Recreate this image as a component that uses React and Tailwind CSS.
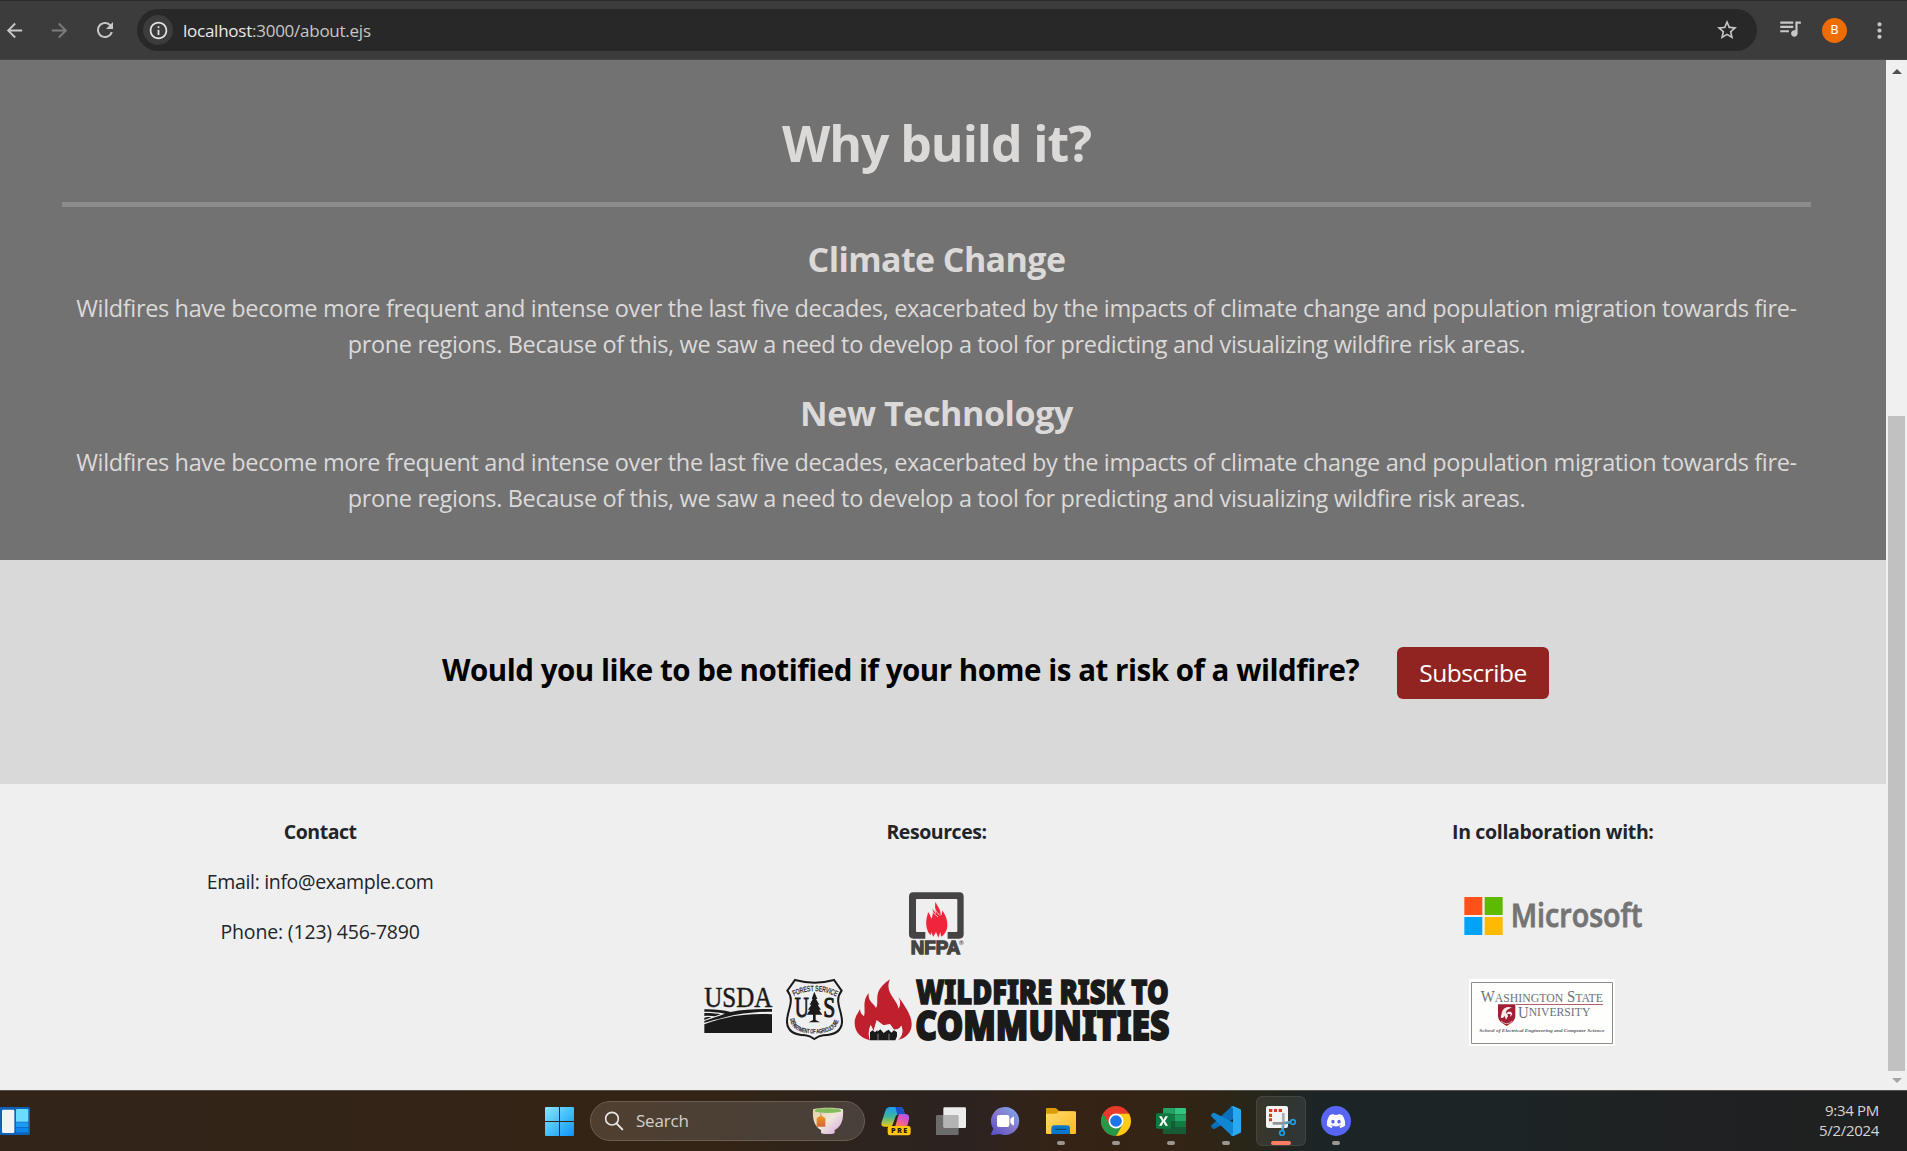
import {
  MdArrowBack,
  MdArrowForward,
  MdRefresh,
  MdInfoOutline,
  MdStarOutline,
  MdQueueMusic,
  MdMoreVert,
} from 'react-icons/md'
import { FaDiscord } from 'react-icons/fa'

/* ---------- Browser toolbar ---------- */

function BrowserBar() {
  return (
    <header className="flex h-[60px] items-center border-t border-b border-t-[#2a2a2a] border-b-[#474747] bg-[#3c3c3c] text-[#c7c7c7]">
      <div className="flex w-[29px] justify-center">
        <MdArrowBack className="size-[23px] shrink-0" />
      </div>
      <div className="flex w-[61px] justify-center text-[#7c7c7c]">
        <MdArrowForward className="size-[23px]" />
      </div>
      <div className="flex w-[30px] justify-center">
        <MdRefresh className="size-6" />
      </div>
      <div className="ml-[17px] flex h-[42px] w-[1620px] items-center rounded-full bg-[#282828] pr-2 pl-[6px]">
        <span className="flex size-[30px] items-center justify-center rounded-full bg-[#3c3c3c] text-[#e3e3e3]">
          <MdInfoOutline className="size-[21px]" />
        </span>
        <span className="ml-2.5 pt-px text-[17px] leading-6 tracking-[-0.25px] text-[#c7c7c7]">
          <span className="text-[#e8e8e8]">localhost</span>:3000/about.ejs
        </span>
        <MdStarOutline className="mr-2.5 ml-auto size-6" />
      </div>
      <MdQueueMusic className="mb-1 ml-[20px] size-[26px]" />
      <span className="ml-[19px] flex size-[25px] items-center justify-center rounded-full bg-[#ef6c00] font-['Roboto',sans-serif] text-[13px] text-white">
        B
      </span>
      <MdMoreVert className="ml-5 size-[25px]" />
    </header>
  )
}

function Scrollbar() {
  return (
    <div className="flex w-[21px] flex-col items-center bg-[#f0f0f0]">
      <svg className="mt-[9px] h-[5px] w-[10px]" viewBox="0 0 10 5">
        <path d="M5 0 10 5H0Z" fill="#505050" />
      </svg>
      <div className="mt-[342px] h-[655px] w-[17px] bg-[#c1c1c1]" />
      <svg className="mt-[7px] h-[5px] w-[10px]" viewBox="0 0 10 5">
        <path d="M0 0H10L5 5Z" fill="#a3a3a3" />
      </svg>
    </div>
  )
}

/* ---------- Page sections ---------- */

function Reason({ title, titleClass }) {
  return (
    <article>
      <h2 className={'text-[34px] leading-[42px] font-bold ' + titleClass}>{title}</h2>
      <p className="mt-[10px] text-[23.5px] leading-9 tracking-[-0.355px] whitespace-nowrap">
        Wildfires have become more frequent and intense over the last five decades, exacerbated by the impacts of climate
        change and population migration towards fire-
        <br />
        prone regions. Because of this, we saw a need to develop a tool for predicting and visualizing wildfire risk
        areas.
      </p>
    </article>
  )
}

function WhySection() {
  return (
    <section className="h-[500px] bg-[#727272] pt-[53px] pr-[75px] pl-[62px] text-center text-[#dcd9d9]">
      <h1 className="text-[50px] leading-[60px] font-bold tracking-[-1.1px]">Why build it?</h1>
      <div className="mt-[29px] h-[5px] bg-[#8c8c8c]" />
      <div className="mt-[31px] flex flex-col gap-[30px]">
        <Reason title="Climate Change" titleClass="tracking-[-0.6px]" />
        <Reason title="New Technology" titleClass="tracking-[-0.42px]" />
      </div>
    </section>
  )
}

function SubscribeSection() {
  return (
    <section className="flex h-56 items-start bg-[#d9d9d9] pt-[87px] pl-[442px]">
      <p className="w-[955px] text-[29.5px] leading-[46px] font-bold tracking-[-0.47px] whitespace-nowrap text-black">
        Would you like to be notified if your home is at risk of a wildfire?
      </p>
      <button className="h-[52px] w-[152px] rounded-md bg-[#912420] text-[24.5px] tracking-[-0.5px] text-white">
        Subscribe
      </button>
    </section>
  )
}

function NfpaLogo() {
  return (
    <svg className="mt-[44px] h-[66px] w-[57px] overflow-visible" viewBox="684 93 171 198">
      <path
        d="M736 236H700Q687 236 687 223V110Q687 97 700 97H838Q851 97 851 110V223Q851 236 838 236H803V216H829Q832 216 832 213V120Q832 117 829 117H711Q708 117 708 120V213Q708 216 711 216H736Z"
        fill="#464344"
      />
      <path
        d="M766 125C774 142 783 147 782 168C786 163 787 157 786 151C797 164 803 180 802 198C801 214 792 226 783 230L781 216L775 233L768 216L760 230L753 216L752 226C741 215 737 196 739 180C740 170 744 163 744 156C750 163 752 170 754 177C758 167 761 158 757 147C764 151 763 158 770 163C777 168 779 173 778 179C774 171 762 160 766 125Z"
        fill="#f0243a"
      />
      <path d="M763 134C760 147 770 155 779 166M757 150C757 160 768 164 774 171" stroke="#efefef" strokeWidth="2.5" fill="none" />
      <text
        x="692"
        y="283"
        textLength="149"
        lengthAdjust="spacingAndGlyphs"
        fontSize="56"
        fill="#464344"
        stroke="#464344"
        strokeWidth="4"
        className="font-['Liberation_Sans',sans-serif] font-bold"
      >
        NFPA
      </text>
      <circle cx="844" cy="248" r="6.5" fill="none" stroke="#77757a" strokeWidth="1.5" />
      <text x="840.5" y="252" fontSize="10" fill="#464344" className="font-['Liberation_Sans',sans-serif] font-bold">
        R
      </text>
    </svg>
  )
}

function WildfireRiskLogo() {
  return (
    <svg className="mt-[21px] ml-0.5 h-16 w-[466px] overflow-visible" viewBox="72 357 1398 192">
      <g fill="#1a1a1a">
        <text
          x="73"
          y="443"
          textLength="204"
          lengthAdjust="spacingAndGlyphs"
          fontSize="88"
          stroke="#1a1a1a"
          strokeWidth="1.5"
          className="font-['Liberation_Serif',serif]"
        >
          USDA
        </text>
        <path d="M73 451C100 450 130 453 152 459C190 451 235 450 276 450V458C225 458 175 464 138 474C110 481 90 486 73 491V486C95 478 115 471 135 464C115 459 92 458 73 458Z" />
        <path d="M73 462C90 461 108 463 122 466L104 472C94 470 84 470 73 471ZM73 476C80 474 87 474 94 475L73 483Z" />
        <path d="M73 496C140 470 205 463 276 466V522H73Z" />

        <path
          d="M345 363C382 373 425 373 462 363L485 395C477 405 473 417 475 431C477 450 487 468 486 490C484 517 460 528 430 529C418 530 410 535 403 540C396 535 388 530 376 529C346 528 323 517 321 490C320 468 330 450 332 431C334 417 330 405 322 395Z"
          fill="none"
          stroke="#1a1a1a"
          strokeWidth="6"
        />
        <path id="shieldTop" d="M342 411Q403 381 466 411" fill="none" />
        <path id="shieldBottom" d="M331 479C333 515 368 523 403 523C438 523 473 515 476 479" fill="none" />
        <g className="font-['Liberation_Sans',sans-serif]" stroke="#1a1a1a" strokeWidth="0.8">
          <text fontSize="23">
            <textPath href="#shieldTop" textLength="132" lengthAdjust="spacingAndGlyphs">
              FOREST SERVICE
            </textPath>
          </text>
          <text fontSize="18">
            <textPath href="#shieldBottom" textLength="184" lengthAdjust="spacingAndGlyphs">
              DEPARTMENT OF AGRICULTURE
            </textPath>
          </text>
        </g>
        <g fontSize="86" className="font-['Liberation_Serif',serif]" stroke="#1a1a1a" strokeWidth="3">
          <text x="344" y="475" textLength="42" lengthAdjust="spacingAndGlyphs">
            U
          </text>
          <text x="430" y="475" textLength="36" lengthAdjust="spacingAndGlyphs">
            S
          </text>
        </g>
        <path d="M403 398L412 420L408 420L418 437L413 437L423 452L417 452L427 467H407V483L420 490H386L399 483V467H380L390 452L384 452L394 437L389 437L398 420L395 420Z" />
      </g>

      <path
        d="M630 361C612 400 651 420 656 449C662 438 662 426 655 413C674 440 694 466 695 494C696 520 678 538 654 543C668 530 670 517 664 500C660 508 652 512 642 512L630 496L610 499L590 484L581 516L572 497C566 512 564 528 570 544C542 538 523 518 524 490C524 474 534 463 540 451C541 462 546 468 552 472C558 452 545 428 566 402C564 428 578 430 588 447C600 425 574 398 630 361Z"
        fill="#c01f2e"
      />
      <path
        d="M572 500L581 516L590 484L610 499L630 496L642 512C652 512 660 508 664 500C670 517 668 530 654 543H570C564 528 566 512 572 500Z"
        fill="#efefef"
      />
      <path
        d="M570 544V520L578 514L585 520L592 513V518L601 511L611 522L620 515L626 512L634 521L642 514L651 520V532L646 544Z"
        fill="#1a1a1a"
      />
      <path d="M594 524V543M627 524V543" stroke="#efefef" strokeWidth="1.5" />

      <g fill="#1a1a1a" className="font-['Noto_Sans',sans-serif] font-black">
        <text x="708" y="435" fontSize="101" textLength="758" lengthAdjust="spacingAndGlyphs" stroke="#1a1a1a" strokeWidth="4.5">
          WILDFIRE RISK TO
        </text>
        <text x="706" y="542" fontSize="124" textLength="762" lengthAdjust="spacingAndGlyphs" stroke="#1a1a1a" strokeWidth="5.5">
          COMMUNITIES
        </text>
      </g>
    </svg>
  )
}

function MicrosoftLogo() {
  return (
    <svg className="mt-[49px] h-[40px] w-[178px] overflow-visible" viewBox="102 81 534 120">
      <path d="M103 84h54v54h-54z" fill="#ff5119" />
      <path d="M164 84h54v54h-54z" fill="#5eba00" />
      <path d="M103 144h54v54h-54z" fill="#00a3f5" />
      <path d="M164 144h54v54h-54z" fill="#ffb900" />
      <text
        x="242"
        y="175"
        fontSize="96"
        textLength="395"
        lengthAdjust="spacingAndGlyphs"
        fill="#747474"
        stroke="#747474"
        strokeWidth="2.5"
        className="font-['Open_Sans',sans-serif] font-semibold"
      >
        Microsoft
      </text>
    </svg>
  )
}

function WsuLogo() {
  return (
    <svg className="mt-[43px] mr-[22px] h-[67px] w-[146px]" viewBox="117 330 438 201">
      <path d="M117 330h438v201H117z" fill="#fefefd" />
      <path d="M124.5 340.500h423v183h-423z" fill="none" stroke="#8d8d8d" strokeWidth="3" />
      <g fill="#6b7378" className="font-['Liberation_Serif',serif]">
        <text x="152" y="399" fontSize="48" textLength="367" lengthAdjust="spacingAndGlyphs">
          W<tspan fontSize="38">ASHINGTON</tspan> S<tspan fontSize="38">TATE</tspan>
        </text>
        <text x="264" y="441" fontSize="48" textLength="217" lengthAdjust="spacingAndGlyphs">
          <tspan dy="5">U</tspan>
          <tspan dy="-5" fontSize="38">
            NIVERSITY
          </tspan>
        </text>
      </g>
      <path d="M258 406.500H519" stroke="#a23c4b" strokeWidth="2.500" />
      <path d="M204 406H256V440C256 456 243 463 230 471C217 463 204 456 204 440Z" fill="#a11f34" />
      <path
        d="M246 416C234 410 220 416 216 428L212 446C217 448 222 446 224 440L228 452L234 442L232 434L242 436L240 444L247 436L243 428L234 428L228 434C226 424 236 418 246 416Z"
        fill="#f6eeee"
      />
      <path d="M213 456Q230 472 247 456" fill="none" stroke="#f6eeee" strokeWidth="2" />
      <text
        x="148"
        y="490"
        fontSize="15"
        textLength="375"
        lengthAdjust="spacingAndGlyphs"
        fill="#55595c"
        className="font-['Liberation_Serif',serif] font-bold italic"
      >
        School of Electrical Engineering and Computer Science
      </text>
    </svg>
  )
}

function Footer() {
  return (
    <footer className="grid h-[306px] grid-cols-3 bg-[#efefef] pt-[33px] pr-[25px] pl-3 text-[19.500px] leading-[30px] text-[#212529]">
      <div className="flex flex-col items-center gap-5">
        <h3 className="font-bold tracking-[-0.45px]">Contact</h3>
        <p className="tracking-[-0.34px]">Email: info@example.com</p>
        <p className="tracking-[-0.17px]">Phone: (123) 456-7890</p>
      </div>
      <div className="flex flex-col items-center">
        <h3 className="font-bold tracking-[-0.45px]">Resources:</h3>
        <NfpaLogo />
        <WildfireRiskLogo />
      </div>
      <div className="flex flex-col items-center">
        <h3 className="font-bold tracking-[-0.34px]">In collaboration with:</h3>
        <MicrosoftLogo />
        <WsuLogo />
      </div>
    </footer>
  )
}

/* ---------- Taskbar ---------- */

function WidgetsIcon() {
  return (
    <svg className="h-7 w-[30px]" viewBox="0 0 90 84">
      <rect x="-8" width="98" height="84" rx="5" fill="#0f62b8" />
      <rect x="6" y="8" width="37" height="70" rx="4" fill="#f3f3f3" />
      <path d="M48 9Q48 6 51 6H82Q85 6 85 9V44H48Z" fill="#69dcff" />
      <path d="M48 46H85V60H48Z" fill="#1a9cf5" />
      <path d="M48 62H85V76H48Z" fill="#0f86ee" />
    </svg>
  )
}

function StartIcon() {
  return (
    <svg className="size-[29px]" viewBox="0 0 87 87">
      <defs>
        <linearGradient id="startGrad" x1="0" y1="0" x2="1" y2="1">
          <stop offset="0" stopColor="#8be2ff" />
          <stop offset="0.5" stopColor="#45c0fa" />
          <stop offset="1" stopColor="#0c93fb" />
        </linearGradient>
      </defs>
      <path
        d="M3 0H42V42H0V3Q0 0 3 0ZM45 0H84Q87 0 87 3V42H45ZM0 45H42V87H3Q0 87 0 84ZM45 45H87V84Q87 87 84 87H45Z"
        fill="url(#startGrad)"
      />
    </svg>
  )
}

function SearchBox() {
  return (
    <div className="ml-[16px] flex h-10 w-[275px] items-center rounded-full border border-[#6b5e50] bg-linear-to-r from-[#4f3f30] to-[#48403a] pl-[13px]">
      <svg className="size-5" viewBox="222 79 60 60">
        <circle cx="246" cy="102" r="19" fill="none" stroke="#e8e6e4" strokeWidth="5" />
        <path d="M260 117L277 134" stroke="#e8e6e4" strokeWidth="6" strokeLinecap="round" />
      </svg>
      <span className="ml-3 text-[17px] leading-6 tracking-[-0.2px] text-[#d6d0ca]">Search</span>
      <svg className="mr-5 ml-auto h-7 w-8" viewBox="846 69 96 84">
        <defs>
          <linearGradient id="cupGrad" x1="0" y1="0" x2="1" y2="1">
            <stop offset="0" stopColor="#e6cf9f" />
            <stop offset="0.5" stopColor="#efe6d9" />
            <stop offset="1" stopColor="#d7a5ea" />
          </linearGradient>
          <linearGradient id="tagGrad" x1="0" y1="0" x2="0" y2="1">
            <stop offset="0" stopColor="#ec9a1c" />
            <stop offset="1" stopColor="#d0683a" />
          </linearGradient>
        </defs>
        <path
          d="M849 76C875 70 914 70 939 76C941 104 936 128 914 138V146Q914 150 894 150Q874 150 873 146V138C852 128 847 104 849 76Z"
          fill="url(#cupGrad)"
        />
        <ellipse cx="894" cy="80" rx="40" ry="7" fill="#83bd5b" />
        <path d="M872 84V98" stroke="#b9a9b5" strokeWidth="4" />
        <path d="M873 94L886 103V128H860V103Z" fill="url(#tagGrad)" />
      </svg>
    </div>
  )
}

function CopilotIcon() {
  return (
    <svg className="size-[30px]" viewBox="1055 66 90 90">
      <defs>
        <linearGradient id="cpA" x1="0" y1="0" x2="0" y2="1">
          <stop offset="0" stopColor="#1d9bf0" />
          <stop offset="0.5" stopColor="#3fb79a" />
          <stop offset="1" stopColor="#f2c911" />
        </linearGradient>
        <linearGradient id="cpB" x1="0.8" y1="0" x2="0.2" y2="1">
          <stop offset="0" stopColor="#a855f0" />
          <stop offset="0.5" stopColor="#e455b5" />
          <stop offset="1" stopColor="#fb7a55" />
        </linearGradient>
      </defs>
      <path d="M1082 69H1112Q1120 69 1123 79L1126 90H1110Q1102 90 1098 100L1090 122Q1087 128 1080 128H1066Q1053 128 1057 114L1068 80Q1072 69 1082 69Z" fill="url(#cpA)" />
      <path d="M1098 69H1112Q1120 69 1123 79L1126 90H1110L1104 92Z" fill="#1d4fc9" />
      <path d="M1110 90H1130Q1142 92 1139 106L1134 126H1098L1106 98Q1108 92 1110 90Z" fill="url(#cpB)" />
      <rect x="1075" y="126" width="69" height="28" rx="7" fill="#ffc708" />
      <text
        x="1085"
        y="148"
        fontSize="22"
        textLength="49"
        fill="#1d1a10"
        className="font-['Open_Sans',sans-serif] font-extrabold"
      >
        PRE
      </text>
    </svg>
  )
}

function TaskViewIcon() {
  return (
    <svg className="size-[30px]" viewBox="-12 63 90 90">
      <rect x="10" y="67" width="68" height="62" rx="4" fill="#ececec" />
      <path d="M-8 90H10V125Q10 129 14 129H56V146Q56 150 52 150H-12V94Q-12 90 -8 90Z" fill="#6c6c6c" />
      <path d="M10 90H52Q56 90 56 94V129H14Q10 129 10 125Z" fill="#b4b4b4" />
    </svg>
  )
}

function TeamsIcon() {
  return (
    <svg className="size-[30px]" viewBox="153 63 90 90">
      <defs>
        <linearGradient id="chatGrad" x1="0.9" y1="0.1" x2="0.1" y2="1">
          <stop offset="0" stopColor="#7aa5ee" />
          <stop offset="0.45" stopColor="#8878c9" />
          <stop offset="1" stopColor="#5a52c8" />
        </linearGradient>
      </defs>
      <path d="M196 66A42 42 0 1 1 180 147L157 150Q152 150 154 145L160 131A42 42 0 0 1 196 66Z" fill="url(#chatGrad)" />
      <rect x="171" y="90" width="37" height="36" rx="6" fill="#fff" />
      <path d="M211 102L219 95Q222 93 222 97V119Q222 123 219 121L211 114Z" fill="#fff" />
    </svg>
  )
}

function FolderIcon() {
  return (
    <svg className="size-[30px]" viewBox="318 63 90 90">
      <defs>
        <linearGradient id="folderGrad" x1="0" y1="0" x2="1" y2="1">
          <stop offset="0" stopColor="#ffdb6b" />
          <stop offset="1" stopColor="#fcb920" />
        </linearGradient>
      </defs>
      <path d="M318 72Q318 69 321 69H345Q348 69 350 71L358 79H400V95H318Z" fill="#dc9c05" />
      <path d="M318 86H345Q350 86 353 83L356 79H405Q408 79 408 82V144Q408 147 405 147H321Q318 147 318 144Z" fill="url(#folderGrad)" />
      <path d="M334 147V131Q334 121 344 121H380Q390 121 390 131V147Z" fill="#0a78c8" />
      <path d="M346 133H378" stroke="#06406f" strokeWidth="3" strokeLinecap="round" />
    </svg>
  )
}

function ChromeIcon() {
  return (
    <svg className="size-[30px]" viewBox="-45 -45 90 90">
      <circle r="45" fill="#e8392d" />
      <path d="M0 -22H39.200A45 45 0 0 1 0 45L19 11Z" fill="#fdcb14" />
      <path d="M-39 -22.500L-19 11L0 22L19.500 11L0 45A45 45 0 0 1 -39 -22.500Z" fill="#279847" />
      <circle r="22.500" fill="#fff" />
      <circle r="17.500" fill="#1e75ea" />
    </svg>
  )
}

function ExcelIcon() {
  return (
    <svg className="size-[30px]" viewBox="648 63 90 90">
      <path d="M669 72Q669 69 672 69H704V88H669Z" fill="#21a366" />
      <path d="M704 69H735Q738 69 738 72V88H704Z" fill="#33c481" />
      <path d="M669 88H704V108H669Z" fill="#107c41" />
      <path d="M704 88H738V108H704Z" fill="#21a366" />
      <path d="M669 108H704V128H669Z" fill="#185c37" />
      <path d="M704 108H738V128H704Z" fill="#107c41" />
      <path d="M669 127H738V144Q738 147 735 147H672Q669 147 669 144Z" fill="#185c37" />
      <rect x="648" y="85" width="45" height="46" rx="4" fill="#0f7a40" />
      <path d="M657 94H665L670.500 104L676 94H684L675 108L684 122H676L670.500 112L665 122H657L666 108Z" fill="#fff" />
    </svg>
  )
}

function VSCodeIcon() {
  return (
    <svg className="size-[30px]" viewBox="813 63 90 90">
      <path d="M880 64L903 74V90L824 131Q820 133 817 130L814 126Q812 123 815 120L872 67Q876 63 880 64Z" fill="#0a6fb8" />
      <path d="M880 153L903 142V124L824 84Q820 82 817 85L814 89Q812 92 815 95L872 149Q876 153 880 153Z" fill="#1187d2" />
      <path d="M880 64L900 72Q903 74 903 77V139Q903 142 900 144L880 153Q875 153 872 149Q879 151 879 144V72Q879 65 872 67Q876 62 880 64Z" fill="#2aa9f3" />
    </svg>
  )
}

function SnippingIcon() {
  return (
    <svg className="size-[30px]" viewBox="978 63 90 90">
      <rect x="978" y="63" width="66" height="66" rx="6" fill="#f1f3f4" />
      <path d="M987 72h10v9h-10zM1002 72h9v9h-9zM1016 72h10v9h-10zM987 86h9v10h-9zM987 100h9v9h-9z" fill="#d83b1c" />
      <path d="M1030 84V112L1028 134" fill="none" stroke="#a9b0b6" strokeWidth="8" />
      <path d="M998 115H1030L1050 111" fill="none" stroke="#8d959c" strokeWidth="8" />
      <circle cx="1059" cy="111" r="7" fill="none" stroke="#1ba0e6" strokeWidth="5" />
      <circle cx="1026" cy="144" r="7" fill="none" stroke="#1ba0e6" strokeWidth="5" />
      <path d="M1052 112L1036 116M1028 137L1031 122" stroke="#1ba0e6" strokeWidth="4" />
    </svg>
  )
}

function DiscordIcon() {
  return (
    <span className="flex size-[30px] items-center justify-center rounded-full bg-[#5865f2]">
      <FaDiscord className="size-[20px] text-white" />
    </span>
  )
}

function TaskbarItem({ icon: Icon, running, active }) {
  return (
    <div className="flex h-[60px] w-[55px] justify-center pt-[5px]">
      <div
        className={
          'flex h-[50px] w-[50px] flex-col items-center rounded-md border pt-[9px] ' +
          (active ? 'border-white/8 bg-white/8' : 'border-transparent')
        }
      >
        <Icon />
        {running && (
          <span
            className={'mt-[5px] h-1 rounded-full ' + (active ? 'w-5 bg-[#f77e63]' : 'w-2 bg-[#9b9690]')}
          />
        )}
      </div>
    </div>
  )
}

const APPS = [
  { icon: CopilotIcon },
  { icon: TaskViewIcon },
  { icon: TeamsIcon },
  { icon: FolderIcon, running: true },
  { icon: ChromeIcon, running: true },
  { icon: ExcelIcon, running: true },
  { icon: VSCodeIcon, running: true },
  { icon: SnippingIcon, running: true, active: true },
  { icon: DiscordIcon, running: true },
]

function Taskbar() {
  return (
    <div className="flex h-[61px] items-center border-t border-[#55504a] bg-[linear-gradient(90deg,#33241a_0%,#332415_38%,#2d241f_45%,#2c2320_51%,#352315_56%,#332415_62%,#2a2618_65%,#1c2526_69%,#1b2526_75%,#1f2122_88%,#202020_100%)]">
      <WidgetsIcon />
      <div className="ml-[515px]">
        <StartIcon />
      </div>
      <SearchBox />
      <div className="ml-[3px] flex">
        {APPS.map((app, i) => (
          <TaskbarItem key={i} {...app} />
        ))}
      </div>
      <div className="mr-[28px] mb-0.5 ml-auto text-right text-[15px] leading-5 tracking-[-0.3px] text-[#d5d5d5]">
        <div>9:34 PM</div>
        <div>5/2/2024</div>
      </div>
    </div>
  )
}

export default function App() {
  return (
    <div className="flex h-[1151px] w-[1907px] flex-col overflow-hidden font-['Open_Sans',sans-serif]">
      <BrowserBar />
      <div className="flex h-[1030px]">
        <main className="w-[1886px]">
          <WhySection />
          <SubscribeSection />
          <Footer />
        </main>
        <Scrollbar />
      </div>
      <Taskbar />
    </div>
  )
}
